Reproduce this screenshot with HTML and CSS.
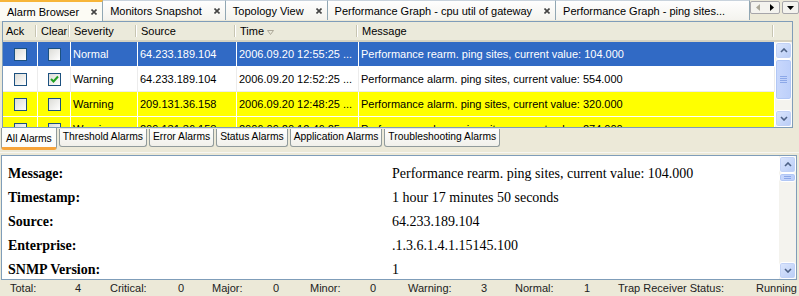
FILE: index.html
```html
<!DOCTYPE html>
<html lang="en">
<head>
    <meta charset="UTF-8">
    <title>Alarm Browser</title>
    <link rel="stylesheet" href="styles.css">
</head>
<body>
    <div class="doctabs">
        <div class="doctab active">Alarm Browser<span class="close"><svg viewBox="0 0 6 6"><path d="M0.5 0.5l5 5M5.5 0.5l-5 5"/></svg></span></div>
        <div class="doctab">Monitors Snapshot<span class="close"><svg viewBox="0 0 6 6"><path d="M0.5 0.5l5 5M5.5 0.5l-5 5"/></svg></span></div>
        <div class="doctab">Topology View<span class="close"><svg viewBox="0 0 6 6"><path d="M0.5 0.5l5 5M5.5 0.5l-5 5"/></svg></span></div>
        <div class="doctab">Performance Graph - cpu util of gateway<span class="close"><svg viewBox="0 0 6 6"><path d="M0.5 0.5l5 5M5.5 0.5l-5 5"/></svg></span></div>
        <div class="doctab last">Performance Graph - ping sites...</div>
        <div class="tabnav">
            <div class="navpair">
                <span class="navbtn"><svg viewBox="0 0 4 7"><path d="M4 0v7L0 3.5z" fill="#aca899"/></svg></span>
                <span class="navbtn"><svg viewBox="0 0 4 7"><path d="M0 0v7l4-3.5z" fill="#000"/></svg></span>
            </div>
            <span class="navbtn drop"><svg viewBox="0 0 7 4"><path d="M0 0h7L3.5 4z" fill="#000"/></svg></span>
        </div>
    </div>

    <div class="grid-panel">
        <div class="head">
            <div class="hcell">Ack</div>
            <div class="hcell">Clear</div>
            <div class="hcell">Severity</div>
            <div class="hcell">Source</div>
            <div class="hcell">Time <svg class="sort" viewBox="0 0 7 5"><path d="M0.5 0.5h6L3.5 4.5z" fill="none" stroke="#aca899"/></svg></div>
            <div class="hcell">Message</div>
        </div>
        <div class="grid-body">
            <div class="rows">
                <div class="row selected">
                    <div class="cbcell"><span class="cb"></span></div>
                    <div class="cbcell"><span class="cb"></span></div>
                    <div>Normal</div>
                    <div>64.233.189.104</div>
                    <div>2006.09.20 12:55:25 ...</div>
                    <div>Performance rearm. ping sites, current value: 104.000</div>
                </div>
                <div class="row">
                    <div class="cbcell"><span class="cb"></span></div>
                    <div class="cbcell"><span class="cb checked"><svg viewBox="0 0 9 9"><path d="M1 4l2.5 2.5L8 1.5" fill="none" stroke="#21a121" stroke-width="2"/></svg></span></div>
                    <div>Warning</div>
                    <div>64.233.189.104</div>
                    <div>2006.09.20 12:52:25 ...</div>
                    <div>Performance alarm. ping sites, current value: 554.000</div>
                </div>
                <div class="row warn">
                    <div class="cbcell"><span class="cb"></span></div>
                    <div class="cbcell"><span class="cb"></span></div>
                    <div>Warning</div>
                    <div>209.131.36.158</div>
                    <div>2006.09.20 12:48:25 ...</div>
                    <div>Performance alarm. ping sites, current value: 320.000</div>
                </div>
                <div class="row warn">
                    <div class="cbcell"><span class="cb"></span></div>
                    <div class="cbcell"><span class="cb"></span></div>
                    <div>Warning</div>
                    <div>209.131.36.158</div>
                    <div>2006.09.20 12:46:25 ...</div>
                    <div>Performance alarm. ping sites, current value: 274.000</div>
                </div>
            </div>
            <div class="vscroll">
                <span class="sbtn"><svg viewBox="0 0 8 5"><path d="M1 4l3-3 3 3" fill="none" stroke="#4d6185" stroke-width="1.6"/></svg></span>
                <span class="thumb tall"><i></i><i></i><i></i><i></i></span>
                <span class="track"></span>
                <span class="sbtn"><svg viewBox="0 0 8 5"><path d="M1 1l3 3 3-3" fill="none" stroke="#4d6185" stroke-width="1.6"/></svg></span>
            </div>
        </div>
    </div>

    <div class="viewtabs">
        <div class="viewtab active">All Alarms</div>
        <div class="viewtab">Threshold Alarms</div>
        <div class="viewtab">Error Alarms</div>
        <div class="viewtab">Status Alarms</div>
        <div class="viewtab">Application Alarms</div>
        <div class="viewtab">Troubleshooting Alarms</div>
    </div>

    <div class="details">
        <div class="props">
            <div class="key">Message:</div><div class="val">Performance rearm. ping sites, current value: 104.000</div>
            <div class="key">Timestamp:</div><div class="val">1 hour 17 minutes 50 seconds</div>
            <div class="key">Source:</div><div class="val">64.233.189.104</div>
            <div class="key">Enterprise:</div><div class="val">.1.3.6.1.4.1.15145.100</div>
            <div class="key">SNMP Version:</div><div class="val">1</div>
        </div>
        <div class="vscroll">
            <span class="sbtn"><svg viewBox="0 0 8 5"><path d="M1 4l3-3 3 3" fill="none" stroke="#4d6185" stroke-width="1.6"/></svg></span>
            <span class="thumb small"><i></i><i></i></span>
            <span class="track"></span>
            <span class="sbtn"><svg viewBox="0 0 8 5"><path d="M1 1l3 3 3-3" fill="none" stroke="#4d6185" stroke-width="1.6"/></svg></span>
        </div>
    </div>

    <div class="statusbar">
        <span>Total:</span><span>4</span>
        <span>Critical:</span><span>0</span>
        <span>Major:</span><span>0</span>
        <span>Minor:</span><span>0</span>
        <span>Warning:</span><span>3</span>
        <span>Normal:</span><span>1</span>
        <span>Trap Receiver Status:</span><span class="right">Running</span>
    </div>
</body>
</html>
```

FILE: styles.css
```css
*{
    box-sizing: border-box;
}
body{
    margin: 0;
    width: 799px;
    height: 296px;
    overflow: hidden;
    background-color: #ece9d8;
    font-family: "Liberation Sans", Arial, sans-serif;
    font-size: 11px;
    color: #000;
}

/* document tabs */
.doctabs{
    display: flex;
    height: 21px;
}
.doctab{
    display: flex;
    align-items: center;
    height: 20px;
    padding: 0 5px 0 7px;
    background: linear-gradient(#fefefe, #f4f3ee);
    border-right: 1px solid #91a7b4;
    border-top: 1px solid #c9d3dd;
    white-space: nowrap;
}
.doctab.active{
    height: 21px;
    background: #fcfbf4;
    border-top: 2px solid #f7b538;
}
.doctab.last{
    padding-right: 24px;
}
.doctab .close{
    display: flex;
    margin-left: 12px;
}
.doctab .close svg{
    width: 6px;
    height: 6px;
    stroke: #444;
    stroke-width: 1.6;
}
.tabnav{
    display: flex;
    gap: 2px;
    margin-left: auto;
    padding: 1px 2px 0 0;
}
.navpair{
    display: flex;
    height: 13px;
    border: 1px solid #a7a6aa;
    border-radius: 2px;
    background: #f4f3ee;
}
.navbtn{
    display: flex;
    align-items: center;
    justify-content: center;
    width: 14px;
    height: 11px;
}
.navbtn svg{
    width: 4px;
    height: 7px;
}
.navbtn.drop{
    width: 17px;
    height: 13px;
    border: 1px solid #a7a6aa;
    border-radius: 2px;
    background: #f4f3ee;
}
.navbtn.drop svg{
    width: 7px;
    height: 4px;
}

/* alarm table */
.grid-panel{
    margin: 0 6px 0 2px;
    height: 107px;
    border: 1px solid #7f9db9;
    background-color: #fff;
}
.head{
    display: grid;
    grid-template-columns: 35px 33px 67px 99px 122px 1fr;
    height: 20px;
    background-color: #ebeadb;
    border-bottom: 2px solid #d6d2c2;
}
.hcell{
    position: relative;
    display: flex;
    align-items: center;
    padding-left: 3px;
}
.hcell::after{
    content: "";
    position: absolute;
    right: 1px;
    top: 3px;
    bottom: 3px;
    border-left: 1px solid #c7c5b2;
    border-right: 1px solid #fff;
}
.hcell:last-child::after{
    right: 18px;
}
.sort{
    width: 7px;
    height: 5px;
    margin-left: 3px;
    margin-top: 3px;
}
.grid-body{
    display: flex;
    height: 85px;
}
.rows{
    flex: 1;
    overflow: hidden;
}
.row{
    display: grid;
    grid-template-columns: 35px 33px 67px 99px 122px 1fr;
    height: 25px;
}
.row > div{
    display: flex;
    align-items: center;
    padding-left: 2px;
    white-space: nowrap;
    overflow: hidden;
    border-right: 1px solid #ececec;
    border-bottom: 1px solid #ececec;
}
.row > .cbcell{
    justify-content: center;
    padding-left: 0;
}
.row.selected{
    background-color: #316ac5;
    color: #fff;
}
.row.warn{
    background-color: #ffff00;
}
.row.warn > div,
.row.selected > div{
    border-color: #fff;
}
.cb{
    display: flex;
    align-items: center;
    justify-content: center;
    width: 13px;
    height: 13px;
    border: 1px solid #1c5180;
    background: linear-gradient(135deg, #dcdcd7, #fff);
}
.cb svg{
    width: 9px;
    height: 9px;
}

/* scrollbars */
.vscroll{
    display: flex;
    flex-direction: column;
    width: 17px;
    background-color: #f4f3ee;
}
.sbtn{
    display: flex;
    align-items: center;
    justify-content: center;
    height: 17px;
    border: 1px solid #fff;
    border-radius: 3px;
    background: linear-gradient(135deg, #dde7fd, #b8ccf6);
    box-shadow: inset 0 0 0 1px #c2d2f6;
}
.sbtn svg{
    width: 8px;
    height: 5px;
}
.thumb{
    display: flex;
    flex-direction: column;
    align-items: center;
    justify-content: center;
    gap: 1px;
    border: 1px solid #fff;
    border-radius: 3px;
    background: linear-gradient(90deg, #c9d8fc, #bccffa);
    box-shadow: inset 0 0 0 1px #b1c7f5;
}
.thumb.tall{
    height: 41px;
}
.thumb.small{
    height: 9px;
}
.thumb i{
    display: block;
    width: 7px;
    height: 1px;
    background-color: #8ca8e8;
}
.track{
    flex: 1;
}

/* lower tabs */
.viewtabs{
    display: flex;
    gap: 2px;
    height: 25px;
    padding-left: 1px;
    border-bottom: 1px solid #f7f6f1;
    margin-bottom: 2px;
    font-size: 10.3px;
}
.viewtab{
    height: 18px;
    margin-top: 1px;
    padding: 2px 3px 0;
    white-space: nowrap;
    background: linear-gradient(#fefefe, #f1f0ea);
    border: 1px solid #919b9c;
    border-top: none;
    border-radius: 0 0 3px 3px;
}
.viewtab.active{
    height: 22px;
    margin-top: 0;
    padding: 5px 4px 0;
    background: #fdfdfb;
    border-bottom: 3px solid #f7a43a;
}

/* details */
.details{
    display: flex;
    margin: 0 2px 0 1px;
    height: 125px;
    border: 1px solid #7f9db9;
    background-color: #fff;
}
.props{
    flex: 1;
    display: grid;
    grid-template-columns: 384px 1fr;
    grid-auto-rows: 24px;
    align-items: center;
    padding: 6px 0 0 6px;
    overflow: hidden;
    font-family: "Liberation Serif", "Times New Roman", serif;
    font-size: 14px;
}
.key{
    font-weight: bold;
}

/* status bar */
.statusbar{
    display: grid;
    grid-template-columns: 65px 35px 68px 34px 61px 37px 60px 38px 73px 34px 69px 34px 135px 1fr;
    align-items: center;
    height: 16px;
    padding: 0 2px 0 10px;
    color: #222;
}
.statusbar .right{
    text-align: right;
}
```
